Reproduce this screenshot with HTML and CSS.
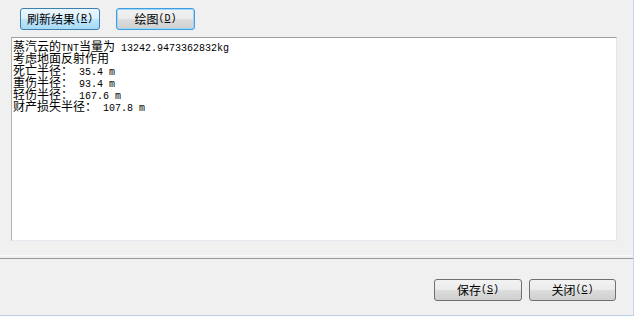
FILE: index.html
```html
<!DOCTYPE html>
<html>
<head>
<meta charset="utf-8">
<link rel="stylesheet" href="styles.css">
</head>
<body>
<div class="window">
  <div class="top">
    <div class="toolbar">
      <button class="btn btn-hover">刷新结果<span class="a">(<u>R</u>)</span></button>
      <button class="btn btn-focus">绘图<span class="a">(<u>D</u>)</span></button>
    </div>
    <div class="textbox">
      <div class="line">蒸汽云的<span class="a">TNT</span>当量为<span class="a"> 13242.9473362832kg</span></div>
      <div class="line">考虑地面反射作用</div>
      <div class="line">死亡半径：<span class="a"> 35.4 m</span></div>
      <div class="line">重伤半径：<span class="a"> 93.4 m</span></div>
      <div class="line">轻伤半径：<span class="a"> 167.6 m</span></div>
      <div class="line">财产损失半径：<span class="a"> 107.8 m</span></div>
    </div>
  </div>
  <div class="sep"></div>
  <div class="bottom">
    <button class="btn btn-save">保存<span class="a">(<u>S</u>)</span></button>
    <button class="btn btn-close">关闭<span class="a">(<u>C</u>)</span></button>
  </div>
</div>
</body>
</html>
```

FILE: styles.css
```css
html, body {
  margin: 0;
  padding: 0;
}
body {
  width: 634px;
  height: 316px;
  overflow: hidden;
  background: #f0f0f0;
  font-family: "Noto Sans CJK SC", "Liberation Sans", sans-serif;
  font-size: 12px;
  color: #000;
}
.window {
  width: 633px;
  height: 315px;
  border-right: 1px solid #c9d9ec;
  border-bottom: 1px solid #b9d1ea;
  display: flex;
  flex-direction: column;
}
.top {
  height: 255px;
  box-sizing: border-box;
  padding-top: 8px;
}
.toolbar {
  display: flex;
  gap: 16px;
  padding-left: 20px;
  height: 22px;
}
.a {
  font-family: "Liberation Mono", monospace;
  font-size: 10px;
  color: #000;
}
.btn {
  box-sizing: border-box;
  height: 22px;
  margin: 0;
  padding: 0;
  font-family: "Noto Sans CJK SC", sans-serif;
  font-size: 12px;
  line-height: 12px;
  color: #000;
  border-radius: 3px;
  border: 1px solid #707070;
  background: linear-gradient(#f2f2f2 0%, #ebebeb 50%, #dddddd 51%, #cfcfcf 100%);
  display: flex;
  align-items: center;
  justify-content: center;
}
.btn-hover {
  width: 80px;
  border-color: #3c7fb1;
  background: linear-gradient(#eaf6fd 0%, #d9f0fc 50%, #bee6fd 51%, #a7d9f5 100%);
}
.btn-focus {
  width: 79px;
  border-color: #3c9fe0;
  box-shadow: inset 0 0 0 1px #9fd6f7;
}
.textbox {
  box-sizing: border-box;
  margin-top: 7px;
  margin-left: 11px;
  width: 606px;
  height: 204px;
  background: #fff;
  border-top: 1px solid #9c9c9c;
  border-left: 1px solid #b5b5b5;
  border-right: 1px solid #dfe6ee;
  border-bottom: 1px solid #e3e9ef;
  padding: 2px 0 0 1px;
}
.line {
  height: 12px;
  line-height: 12px;
  white-space: pre;
}
.sep {
  box-sizing: border-box;
  height: 4px;
  border-top: 1px solid #fafafa;
  border-bottom: 1px solid #9a9a9a;
}
.bottom {
  display: flex;
  justify-content: flex-end;
  gap: 7px;
  padding-top: 20px;
  padding-right: 17px;
}
.btn-save {
  width: 88px;
}
.btn-close {
  width: 87px;
}
```
